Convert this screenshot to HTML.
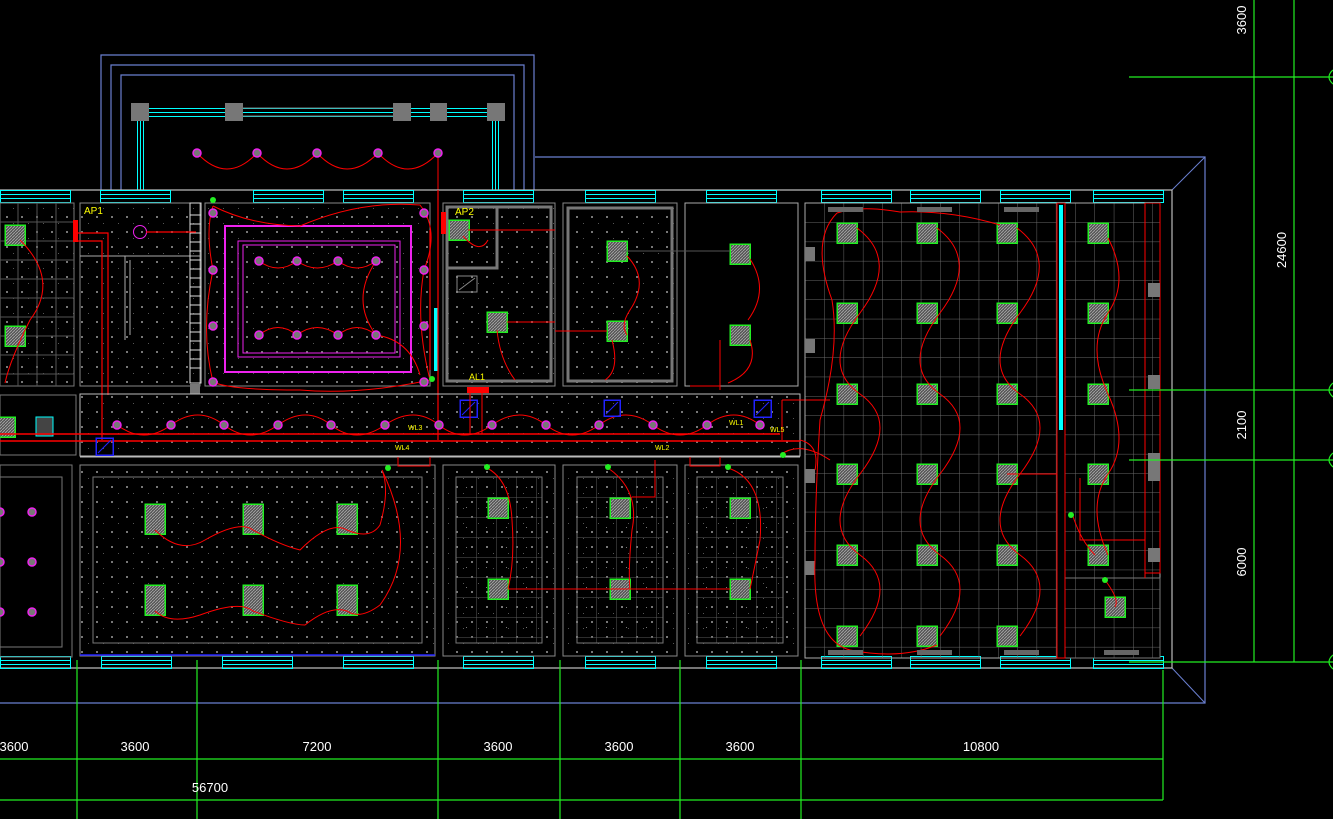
<!DOCTYPE html>
<html><head><meta charset="utf-8"><style>
html,body{margin:0;padding:0;background:#000;overflow:hidden}
svg{display:block}
rect,line{shape-rendering:crispEdges}
text{font-family:"Liberation Sans",sans-serif;}
</style></head><body>
<svg width="1333" height="819" viewBox="0 0 1333 819" xmlns="http://www.w3.org/2000/svg">
<defs>
<pattern id="dots" width="15" height="15" patternUnits="userSpaceOnUse"><rect x="6" y="6" width="2" height="2" fill="#777"/><rect x="13" y="13" width="1" height="1" fill="#555"/></pattern>
<pattern id="grid" width="19.3" height="19.3" patternUnits="userSpaceOnUse" x="805" y="203"><path d="M0 0H19.3M0 0V19.3" stroke="#6a6a6a" stroke-width="1" fill="none"/></pattern>
<pattern id="grid2" width="20" height="20" patternUnits="userSpaceOnUse" x="456" y="477"><path d="M0 0H20M0 0V20" stroke="#5a5a5a" stroke-width="1" fill="none"/><rect x="10" y="10" width="1" height="1" fill="#777"/></pattern>
<pattern id="hatch" width="3" height="3" patternUnits="userSpaceOnUse"><rect width="3" height="3" fill="#555"/><path d="M0 3L3 0" stroke="#aaa" stroke-width="0.8"/></pattern>
<g id="fx"><rect x="-10" y="-10" width="20" height="20" fill="url(#hatch)" stroke="#2e2" stroke-width="1.5"/></g>
<g id="fxt"><rect x="-10" y="-15" width="20" height="30" fill="url(#hatch)" stroke="#2e2" stroke-width="1.5"/></g>
<g id="md"><circle r="4" fill="#777" stroke="#e2e" stroke-width="1.5"/></g>
<g id="gd"><circle r="3" fill="#2e2"/></g>
<g id="win"><rect x="0.5" y="0.5" width="70" height="12" fill="none" stroke="#0ff" stroke-width="1"/><path d="M0 4.5H70M0 8.5H70" stroke="#0ff" shape-rendering="crispEdges"/></g>
</defs>

<path d="M535 157H1205V703H0" stroke="#6a7fd0" stroke-width="1.2" fill="none"/>
<path d="M1172 190L1205 157M1172 668L1205 703" stroke="#6a7fd0" fill="none"/>
<path d="M101 190V55H534V190M111 190V65H524V190M121 190V75H514V190" stroke="#6a7fd0" stroke-width="1.2" fill="none"/>
<path d="M140 108.5H497M140 112.5H497M140 116.5H497" stroke="#0ff"/>
<path d="M234 108H400M234 116H400" stroke="#777"/>
<path d="M137.5 112V190M140.5 112V190M143.5 112V190M492.5 112V190M495.5 112V190M498.5 112V190" stroke="#0ff"/>
<g fill="#777"><rect x="131" y="103" width="18" height="18"/><rect x="225" y="103" width="18" height="18"/><rect x="393" y="103" width="18" height="18"/><rect x="430" y="103" width="17" height="18"/><rect x="487" y="103" width="18" height="18"/></g>
<path d="M197 153Q227 185 257 153Q287 185 317 153Q347 185 378 153Q408 185 438 153V190" stroke="#f00" fill="none"/>
<use href="#md" x="197" y="153"/><use href="#md" x="257" y="153"/><use href="#md" x="317" y="153"/><use href="#md" x="378" y="153"/><use href="#md" x="438" y="153"/>

<path d="M0 190H1172V668H0" stroke="#bbb" stroke-width="1.2" fill="none"/>
<g>
<use href="#win" x="0" y="190"/><use href="#win" x="100" y="190"/><use href="#win" x="253" y="190"/><use href="#win" x="343" y="190"/><use href="#win" x="463" y="190"/><use href="#win" x="585" y="190"/><use href="#win" x="706" y="190"/><use href="#win" x="821" y="190"/><use href="#win" x="910" y="190"/><use href="#win" x="1000" y="190"/><use href="#win" x="1093" y="190"/>
<use href="#win" x="0" y="656"/><use href="#win" x="101" y="656"/><use href="#win" x="222" y="656"/><use href="#win" x="343" y="656"/><use href="#win" x="463" y="656"/><use href="#win" x="585" y="656"/><use href="#win" x="706" y="656"/><use href="#win" x="821" y="656"/><use href="#win" x="910" y="656"/><use href="#win" x="1000" y="656"/><use href="#win" x="1093" y="656"/>
</g>

<rect x="0" y="203" width="74" height="183" fill="url(#dots)" stroke="#777"/>
<path d="M0 222H74M0 241H74M0 260H74M0 279H74M0 298H74M0 317H74M0 336H74M0 355H74M0 374H74M18 203V386M37 203V386M56 203V386" stroke="#555"/>
<use href="#fx" x="15" y="235"/><use href="#fx" x="15" y="336"/>
<path d="M20 240Q60 280 30 320Q10 360 5 383" stroke="#f00" fill="none"/>
<rect x="0" y="395" width="76" height="60" fill="none" stroke="#777"/>
<use href="#fx" x="5" y="427"/>
<rect x="36" y="417" width="17" height="19" fill="#444" stroke="#0ff"/>
<rect x="0" y="465" width="72" height="192" fill="none" stroke="#777"/>
<rect x="0" y="477" width="62" height="170" fill="none" stroke="#777"/>
<use href="#md" x="32" y="512"/><use href="#md" x="32" y="562"/><use href="#md" x="32" y="612"/><use href="#md" x="0" y="512"/><use href="#md" x="0" y="562"/><use href="#md" x="0" y="612"/>

<rect x="80" y="203" width="120" height="183" fill="url(#dots)" stroke="#888"/>
<path d="M80 256H200M125 256V340M130 260V335" stroke="#aaa" fill="none"/>
<rect x="190" y="203" width="11" height="180" fill="none" stroke="#ddd"/>
<path d="M190 215H201M190 224H201M190 233H201M190 242H201M190 251H201M190 260H201M190 269H201M190 278H201M190 287H201M190 296H201M190 305H201M190 314H201M190 323H201M190 332H201M190 341H201M190 350H201M190 359H201M190 368H201" stroke="#ddd"/>
<rect x="190" y="384" width="10" height="10" fill="#777"/>
<circle cx="140" cy="232" r="6.5" fill="none" stroke="#e2e"/>
<path d="M146 232H196M75 233H108V395M78 241H102V440" stroke="#f00" fill="none" stroke-width="1.2"/>
<rect x="73" y="220" width="5" height="22" fill="#f00"/>
<text x="84" y="214" fill="#ff0" font-size="10">AP1</text>

<rect x="205" y="203" width="225" height="183" fill="url(#dots)" stroke="#888"/>
<rect x="225" y="226" width="186" height="146" fill="none" stroke="#e2e" stroke-width="2"/>
<rect x="238" y="241" width="162" height="116" fill="none" stroke="#e2e" stroke-width="1"/>
<rect x="243" y="245" width="152" height="108" fill="none" stroke="#e2e" stroke-width="1"/>
<path d="M213 206Q250 225 300 226Q360 200 420 205Q440 230 424 270Q415 320 430 380Q360 395 300 390Q230 390 213 382Q200 330 213 270Q205 230 213 206" stroke="#f00" fill="none"/>
<path d="M259 261Q278 275 297 261Q317 275 338 261Q357 275 376 261Q350 300 376 335Q357 320 338 335Q317 320 297 335Q278 320 259 335M376 335Q410 340 420 375" stroke="#f00" fill="none"/>
<g><use href="#md" x="213" y="213"/><use href="#md" x="213" y="270"/><use href="#md" x="213" y="326"/><use href="#md" x="213" y="382"/><use href="#md" x="424" y="213"/><use href="#md" x="424" y="270"/><use href="#md" x="424" y="326"/><use href="#md" x="424" y="382"/>
<use href="#md" x="259" y="261"/><use href="#md" x="297" y="261"/><use href="#md" x="338" y="261"/><use href="#md" x="376" y="261"/><use href="#md" x="259" y="335"/><use href="#md" x="297" y="335"/><use href="#md" x="338" y="335"/><use href="#md" x="376" y="335"/></g>
<use href="#gd" x="213" y="200"/><use href="#gd" x="432" y="379"/>
<rect x="434" y="308" width="4" height="63" fill="#0ff"/>
<path d="M438 190V440M430 230V370" stroke="#f00" fill="none" stroke-width="1.2"/>

<rect x="443" y="203" width="112" height="183" fill="url(#dots)" stroke="#888"/>
<path d="M447 207H551V381H447Z" stroke="#777" stroke-width="3" fill="none"/>
<path d="M447 207H497V268H447" stroke="#777" stroke-width="3" fill="none"/>
<rect x="457" y="276" width="20" height="16" fill="none" stroke="#888"/>
<path d="M459 290L475 278" stroke="#888"/>
<rect x="441" y="212" width="5" height="22" fill="#f00"/>
<text x="455" y="215" fill="#ff0" font-size="10">AP2</text>
<use href="#fx" x="459" y="230"/><use href="#fx" x="497" y="322"/>
<path d="M468 230H555M507 322H555M463 236Q480 255 488 240M497 330Q500 360 515 380" stroke="#f00" fill="none"/>
<text x="469" y="380" fill="#ff0" font-size="9">AL1</text>
<rect x="467" y="387" width="22" height="6" fill="#f00"/>

<rect x="563" y="203" width="114" height="183" fill="url(#dots)" stroke="#888"/>
<rect x="568" y="208" width="104" height="173" fill="none" stroke="#777" stroke-width="3"/>
<use href="#fx" x="617" y="251"/><use href="#fx" x="617" y="331"/>
<path d="M627 256Q650 280 630 310Q620 325 627 335M555 331H607M612 340Q620 370 605 380" stroke="#f00" fill="none"/>

<rect x="685" y="203" width="113" height="183" fill="none" stroke="#aaa"/>
<use href="#fx" x="740" y="254"/><use href="#fx" x="740" y="335"/>
<path d="M750 259Q770 290 748 320M750 340Q760 370 728 383M720 340V390M690 386H720" stroke="#f00" fill="none"/>
<path d="M620 251H730" stroke="#555"/>

<rect x="80" y="394" width="720" height="62" fill="url(#dots)" stroke="#bbb"/>
<path d="M0 434H780M0 441H800" stroke="#f00" stroke-width="1.5"/>
<path d="M117 425Q144 445 171 425T224 425T278 425T331 425T385 425T439 425T492 425T546 425T599 425T653 425T707 425T760 425" stroke="#f00" fill="none"/>
<g><use href="#md" x="117" y="425"/><use href="#md" x="171" y="425"/><use href="#md" x="224" y="425"/><use href="#md" x="278" y="425"/><use href="#md" x="331" y="425"/><use href="#md" x="385" y="425"/><use href="#md" x="439" y="425"/><use href="#md" x="492" y="425"/><use href="#md" x="546" y="425"/><use href="#md" x="599" y="425"/><use href="#md" x="653" y="425"/><use href="#md" x="707" y="425"/><use href="#md" x="760" y="425"/></g>
<g fill="none" stroke="#22f" stroke-width="1.5"><rect x="460" y="400" width="17" height="17"/><rect x="604" y="400" width="16" height="16"/><rect x="754" y="400" width="17" height="17"/><rect x="96" y="438" width="17" height="17"/></g>
<path d="M462 415L475 402M606 414L618 402M756 415L769 402M98 453L111 440" stroke="#22f"/>
<path d="M470 390V434M482 390V434M782 400H830M782 400V440M780 455Q800 440 830 460" stroke="#f00" fill="none"/>
<text x="408" y="430" fill="#ff0" font-size="7">WL3</text><text x="395" y="450" fill="#ff0" font-size="7">WL4</text><text x="655" y="450" fill="#ff0" font-size="7">WL2</text><text x="729" y="425" fill="#ff0" font-size="7">WL1</text><text x="770" y="432" fill="#ff0" font-size="7">WL5</text>
<path d="M80 457H800" stroke="#bbb"/>

<rect x="80" y="465" width="355" height="191" fill="url(#dots)" stroke="#888"/>
<rect x="93" y="477" width="329" height="166" fill="none" stroke="#777"/>
<path d="M80 655H435" stroke="#22f" stroke-width="1.5"/>
<use href="#fxt" x="155" y="519"/><use href="#fxt" x="253" y="519"/><use href="#fxt" x="347" y="519"/><use href="#fxt" x="155" y="600"/><use href="#fxt" x="253" y="600"/><use href="#fxt" x="347" y="600"/>
<path d="M155 530Q180 555 205 540Q240 520 253 530Q280 545 300 550Q330 520 347 530Q370 540 380 525Q390 490 382 470M155 611Q170 625 200 615Q240 600 253 611Q290 625 305 625Q330 605 347 611Q360 620 380 605Q420 550 382 470" stroke="#f00" fill="none"/>
<use href="#gd" x="388" y="468"/>

<rect x="443" y="465" width="112" height="191" fill="url(#dots)" stroke="#888"/>
<rect x="456" y="477" width="86" height="166" fill="url(#grid2)" stroke="#777"/>
<rect x="563" y="465" width="114" height="191" fill="url(#dots)" stroke="#888"/>
<rect x="577" y="477" width="86" height="166" fill="url(#grid2)" stroke="#777"/>
<rect x="685" y="465" width="113" height="191" fill="url(#dots)" stroke="#888"/>
<rect x="697" y="477" width="86" height="166" fill="url(#grid2)" stroke="#777"/>
<use href="#fx" x="498" y="508"/><use href="#fx" x="498" y="589"/><use href="#fx" x="620" y="508"/><use href="#fx" x="620" y="589"/><use href="#fx" x="740" y="508"/><use href="#fx" x="740" y="589"/>
<path d="M487 468Q510 480 512 520Q515 560 508 589M508 589H730M608 468Q640 490 632 530Q628 570 630 589M632 497H655V460M728 468Q765 480 760 540Q752 580 750 589" stroke="#f00" fill="none"/>
<use href="#gd" x="487" y="467"/><use href="#gd" x="608" y="467"/><use href="#gd" x="728" y="467"/>
<path d="M398 457V466H430V457M690 457V466H720V457" stroke="#f00" fill="none"/>

<rect x="805" y="203" width="355" height="455" fill="url(#grid)" stroke="#aaa"/>
<rect x="1065" y="578" width="95" height="80" fill="#000"/>
<rect x="1065" y="578" width="95" height="80" fill="url(#grid)" stroke="#777"/>
<rect x="1057" y="203" width="8" height="455" fill="#000" stroke="#f00"/>
<rect x="1059" y="205" width="4" height="225" fill="#0ff"/>
<rect x="1145" y="203" width="15" height="370" fill="none" stroke="#f00"/>
<g fill="#777"><rect x="805" y="247" width="10" height="14"/><rect x="805" y="339" width="10" height="14"/><rect x="805" y="469" width="10" height="14"/><rect x="805" y="561" width="10" height="14"/><rect x="1148" y="283" width="12" height="14"/><rect x="1148" y="375" width="12" height="14"/><rect x="1148" y="453" width="12" height="28"/><rect x="1148" y="548" width="12" height="14"/></g>
<g>
<use href="#fx" x="847" y="233"/><use href="#fx" x="847" y="313"/><use href="#fx" x="847" y="394"/><use href="#fx" x="847" y="474"/><use href="#fx" x="847" y="555"/><use href="#fx" x="847" y="636"/>
<use href="#fx" x="927" y="233"/><use href="#fx" x="927" y="313"/><use href="#fx" x="927" y="394"/><use href="#fx" x="927" y="474"/><use href="#fx" x="927" y="555"/><use href="#fx" x="927" y="636"/>
<use href="#fx" x="1007" y="233"/><use href="#fx" x="1007" y="313"/><use href="#fx" x="1007" y="394"/><use href="#fx" x="1007" y="474"/><use href="#fx" x="1007" y="555"/><use href="#fx" x="1007" y="636"/>
<use href="#fx" x="1098" y="233"/><use href="#fx" x="1098" y="313"/><use href="#fx" x="1098" y="394"/><use href="#fx" x="1098" y="474"/><use href="#fx" x="1098" y="555"/><use href="#fx" x="1115" y="607"/>
</g>
<g stroke="#f00" fill="none">
<path d="M857 228Q900 260 860 313T860 394T860 474T860 555T860 636"/>
<path d="M937 228Q980 260 940 313T940 394T940 474T940 555T940 636"/>
<path d="M1017 228Q1060 260 1020 313T1020 394T1020 474T1020 555T1020 636"/>
<path d="M1108 238Q1130 280 1108 313T1108 394T1108 474T1108 555"/>
<path d="M837 213Q860 205 900 212Q950 210 1000 225M837 213Q810 240 832 300Q840 350 820 420Q815 500 815 560Q812 640 850 650Q900 660 937 645"/>
<path d="M1007 474H1057M1080 478V540H1145V578M1072 513Q1080 540 1095 555M1105 580Q1120 600 1115 607"/>
<path d="M800 440Q820 445 815 470"/>
</g>
<use href="#gd" x="1071" y="515"/><use href="#gd" x="1105" y="580"/><use href="#gd" x="783" y="455"/>
<g fill="#666"><rect x="828" y="207" width="35" height="5"/><rect x="917" y="207" width="35" height="5"/><rect x="1004" y="207" width="35" height="5"/><rect x="828" y="650" width="35" height="5"/><rect x="917" y="650" width="35" height="5"/><rect x="1004" y="650" width="35" height="5"/><rect x="1104" y="650" width="35" height="5"/></g>

<g stroke="#2e2" stroke-width="1.2">
<path d="M0 759H1163M0 800H1163"/>
<path d="M77 660V819M197 660V819M438 660V819M560 660V819M680 660V819M801 660V819M1163 670V800"/>
</g>
<g fill="#fff" font-size="13" text-anchor="middle">
<text x="14" y="751">3600</text><text x="135" y="751">3600</text><text x="317" y="751">7200</text><text x="498" y="751">3600</text><text x="619" y="751">3600</text><text x="740" y="751">3600</text><text x="981" y="751">10800</text>
<text x="210" y="792">56700</text>
</g>

<g stroke="#2e2" stroke-width="1.2" fill="none">
<path d="M1254 0V662M1294 0V662"/>
<path d="M1129 77H1333M1129 390H1333M1129 460H1333M1129 662H1333"/>
<path d="M1333 70Q1325 77 1333 84M1333 383Q1325 390 1333 397M1333 453Q1325 460 1333 467M1333 655Q1325 662 1333 669"/>
</g>
<g fill="#fff" font-size="13" text-anchor="middle">
<text transform="translate(1246 20) rotate(-90)">3600</text>
<text transform="translate(1286 250) rotate(-90)">24600</text>
<text transform="translate(1246 425) rotate(-90)">2100</text>
<text transform="translate(1246 562) rotate(-90)">6000</text>
</g>
</svg>
</body></html>
